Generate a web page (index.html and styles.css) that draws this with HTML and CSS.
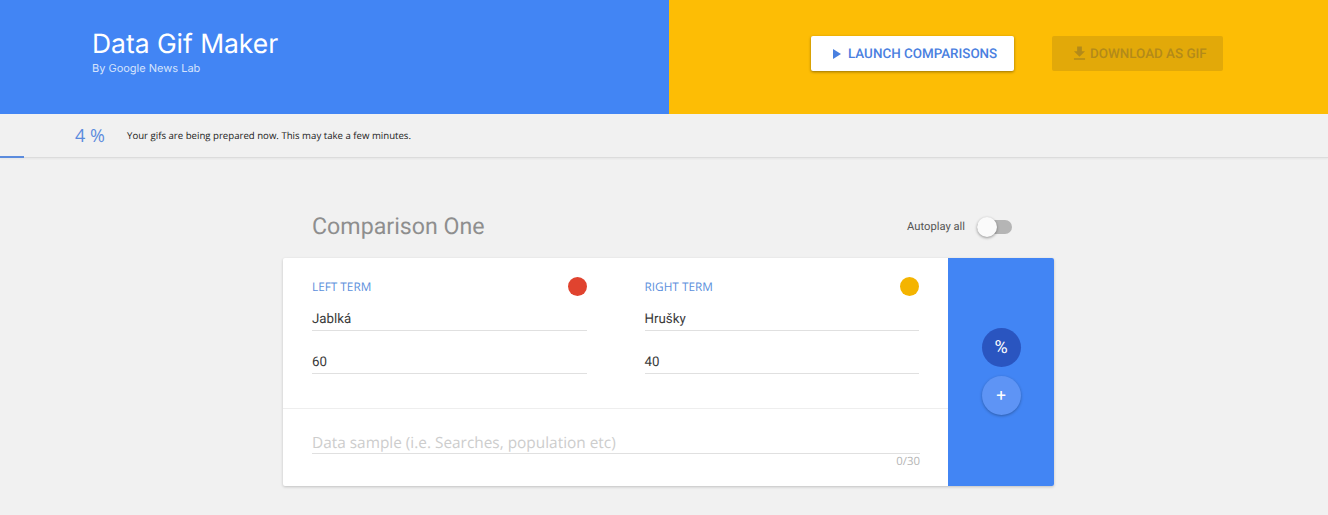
FILE: index.html
```html
<!DOCTYPE html>
<html lang="en">
<head>
<meta charset="utf-8">
<title>Data Gif Maker</title>
<link rel="stylesheet" href="styles.css">
</head>
<body>
<header class="header">
  <div class="brand">
    <h1 class="brand-title">Data Gif Maker</h1>
    <p class="brand-sub">By Google News Lab</p>
  </div>
  <div class="actions">
    <button class="btn btn-launch" type="button">
      <svg class="btn-play" viewBox="0 0 10 12" width="10" height="12"><path d="M1 1l8 5-8 5z" fill="currentColor"/></svg>
      <span class="btn-text">LAUNCH COMPARISONS</span>
    </button>
    <button class="btn btn-download" type="button">
      <svg class="btn-dl" viewBox="0 0 24 24" width="19" height="19"><path d="M19 9h-4V3H9v6H5l7 7 7-7zM5 18v2h14v-2H5z" fill="currentColor"/></svg>
      <span class="btn-text">DOWNLOAD AS GIF</span>
    </button>
  </div>
</header>
<section class="status">
  <span class="status-pct">4 %</span>
  <span class="status-msg">Your gifs are being prepared now. This may take a few minutes.</span>
  <div class="status-bar"></div>
</section>
<main class="main">
  <div class="column">
    <div class="title-row">
      <h2 class="comp-title">Comparison One</h2>
      <div class="autoplay">
        <span class="autoplay-label">Autoplay all</span>
        <span class="switch"><span class="switch-knob"></span></span>
      </div>
    </div>
    <div class="card">
      <div class="card-body">
        <div class="terms">
          <div class="term">
            <div class="term-head"><span class="term-label">LEFT TERM</span><span class="dot dot-red"></span></div>
            <div class="field field-name">Jablká</div>
            <div class="field field-value">60</div>
          </div>
          <div class="term">
            <div class="term-head"><span class="term-label">RIGHT TERM</span><span class="dot dot-yellow"></span></div>
            <div class="field field-name">Hrušky</div>
            <div class="field field-value">40</div>
          </div>
        </div>
        <div class="sample">
          <div class="sample-input">Data sample (i.e. Searches, population etc)</div>
          <div class="sample-count">0/30</div>
        </div>
      </div>
      <aside class="side">
        <span class="fab fab-pct">%</span>
        <span class="fab fab-add">+</span>
      </aside>
    </div>
  </div>
</main>
</body>
</html>
```
FILE: styles.css
```css
* { box-sizing: border-box; }
html, body { margin: 0; height: 100%; }
body { background: #f1f1f1; font-family: "Open Sans", sans-serif; overflow: hidden; text-rendering: geometricPrecision; }

.header { display: flex; height: 114px; }
.brand { width: 669px; background: #4285f4; padding: 28px 0 0 92px; color: #fff; }
.brand-title { margin: 0; font: 400 26.5px/32px Inter, sans-serif; letter-spacing: -0.05px; }
.brand-sub { margin: 1px 0 0; font: 400 11px/14px Inter, sans-serif; color: #d5e3fc; }
.actions { flex: 1; background: #fdbd05; display: flex; align-items: flex-start; padding: 36px 0 0 142px; gap: 38px; }
.btn { height: 35px; border: 0; border-radius: 2px; display: flex; align-items: center; font: 500 13.4px/1 Roboto, sans-serif; padding: 0; text-rendering: geometricPrecision; }
.btn-text { padding-top: 2px; }
.btn-launch { width: 203px; background: #fff; color: #4a80e0; box-shadow: 0 1px 3px rgba(0,0,0,.4); padding-left: 21px; }
.btn-play { margin-right: 6px; }
.btn-download { width: 171px; background: #e2a909; color: #b38a1a; padding-left: 18px; }
.btn-dl { margin-right: 1px; }

.status { position: relative; height: 44px; display: flex; align-items: center; border-bottom: 1px solid #dcdcdc; box-shadow: 0 1px 2px rgba(0,0,0,.05); padding-left: 75px; }
.status-pct { font: 400 18px/1 "Open Sans", sans-serif; color: #5b8bdd; width: 52px; }
.status-msg { font-size: 9.64px; color: #222; }
.status-bar { position: absolute; left: 0; bottom: -1px; width: 24px; height: 2px; background: #5b8bdd; }

.main { display: flex; padding-left: 283px; }
.column { width: 771px; }
.title-row { height: 100px; display: flex; align-items: center; justify-content: space-between; padding: 38px 42px 0 29px; }
.comp-title { margin: 0; font: 400 23.2px/1 Roboto, sans-serif; color: #8e8e8e; }
.autoplay { display: flex; align-items: center; gap: 12px; }
.autoplay-label { font: 400 11.2px/1 Roboto, sans-serif; color: #555; }
.switch { position: relative; display: block; width: 35px; height: 14px; border-radius: 7px; background: #b5b5b5; }
.switch-knob { position: absolute; left: 0; top: -3px; width: 20px; height: 20px; border-radius: 50%; background: #fafafa; box-shadow: 0 1px 3px rgba(0,0,0,.4); }

.card { display: flex; height: 228px; background: #fff; border-radius: 2px; box-shadow: 0 1px 3px rgba(0,0,0,.2); }
.card-body { width: 665px; display: flex; flex-direction: column; }
.terms { height: 151px; display: flex; gap: 58px; padding: 0 29px; border-bottom: 1px solid #eee; }
.term { width: 275px; }
.term-head { height: 38px; padding-top: 18px; display: flex; align-items: center; justify-content: space-between; }
.term-label { padding-top: 2px; font-size: 11.8px; font-weight: 500; color: #5c8fdc; }
.dot { width: 19px; height: 19px; border-radius: 50%; }
.dot-red { background: #e0432f; }
.dot-yellow { background: #f4b400; }
.field { display: flex; align-items: flex-end; padding-bottom: 3px; border-bottom: 1px solid #e0e0e0; font: 400 13.3px/14px Roboto, sans-serif; color: #3a3a3a; }
.field-name { height: 35px; }
.field-value { height: 43px; }
.sample { padding: 0 28px 0 29px; }
.sample-input { margin-top: 25px; height: 20px; border-bottom: 1px solid #e0e0e0; font-size: 15.4px; line-height: 18px; color: #cdcdcd; white-space: nowrap; }
.sample-count { margin-top: 1px; text-align: right; font-size: 11.4px; line-height: 14px; color: #b5b5b5; }

.side { flex: 1; background: #4285f4; border-radius: 0 2px 2px 0; display: flex; flex-direction: column; align-items: center; padding-top: 70px; gap: 9px; }
.fab { width: 39px; height: 39px; border-radius: 50%; display: flex; align-items: center; justify-content: center; color: #fff; font-family: Roboto, sans-serif; }
.fab-pct { background: #2a55c0; font-size: 18px; }
.fab-add { background: #5e94f5; font-size: 17px; box-shadow: 0 1px 3px rgba(0,0,0,.3); }
```
